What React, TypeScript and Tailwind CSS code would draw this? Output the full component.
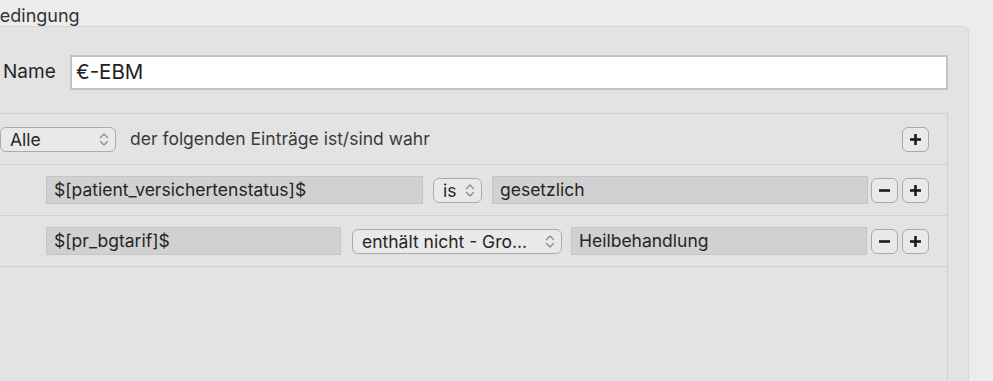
import React from 'react';

const font = { fontFamily: 'Inter, "Liberation Sans", sans-serif' };

function Chevrons() {
  return (
    <svg width="10" height="15" viewBox="0 0 10 15" fill="none" stroke="#8a8a8a" strokeWidth="1.3" strokeLinecap="round" strokeLinejoin="round">
      <path d="M1.5 5.5 L5 2 L8.5 5.5" />
      <path d="M1.5 9.5 L5 13 L8.5 9.5" />
    </svg>
  );
}

function PopUp({ label, className }: { label: string; className: string }) {
  return (
    <div className={`flex h-[25px] flex-none items-center justify-between rounded-[6px] border border-[#ababab] bg-[#e9e9e9] pl-[9px] pr-[6px] text-[17.5px] leading-[21px] text-[#262626] ${className}`}>
      <span className="overflow-hidden whitespace-nowrap">{label}</span>
      <Chevrons />
    </div>
  );
}

function Field({ text, className }: { text: string; className: string }) {
  return (
    <div className={`flex h-[28px] flex-none items-center border border-[#c4c4c4] bg-[#d1d1d1] px-[7px] text-[17.5px] leading-[22px] text-[#252525] ${className}`}>
      {text}
    </div>
  );
}

function SquareButton({ sign, className = '' }: { sign: '+' | '-'; className?: string }) {
  return (
    <div className={`flex h-[25px] w-[27px] flex-none items-center justify-center rounded-[6px] border border-[#a9a9a9] bg-[#e9e9e9] ${className}`}>
      <svg width="13" height="13" viewBox="0 0 13 13" stroke="#1a1a1a" strokeWidth="2.6">
        <path d="M1 6.5 H12" />
        {sign === '+' && <path d="M6.5 1 V12" />}
      </svg>
    </div>
  );
}

export default function App() {
  return (
    <div className="h-[381px] w-[993px] overflow-hidden bg-[#ececec]" style={font}>
      <div className="ml-[-12px] h-[26px] whitespace-nowrap pt-[6px] text-[18px] leading-[20px] text-[#333]">Bedingung</div>

      <div className="ml-[-10px] h-[400px] w-[979px] rounded-tr-[6px] border border-[#d6d6d6] bg-[#e3e3e3]">
        <div className="flex items-center pl-[12px] pt-[28px]">
          <span className="w-[67px] flex-none text-[19px] text-[#262626]">Name</span>
          <div className="flex h-[35px] w-[878px] flex-none items-center border-2 border-[#c3c3c3] bg-white pl-[4px] text-[20.5px] text-[#222]">
            €-EBM
          </div>
        </div>

        <div className="mt-[23px] h-[300px] w-[957px] border-r border-t border-[#cfcfcf]">
          <div className="flex h-[51px] items-center border-b border-[#d0d0d0] pl-[9px] pr-[18px]">
            <PopUp label="Alle" className="w-[116px]" />
            <span className="ml-[14px] text-[17.5px] text-[#3a3a3a]">der folgenden Einträge ist/sind wahr</span>
            <SquareButton sign="+" className="ml-auto" />
          </div>

          <div className="flex h-[51px] items-center border-b border-[#d0d0d0] pl-[55px]">
            <Field text="$[patient_versichertenstatus]$" className="w-[377px]" />
            <PopUp label="is" className="ml-[10px] w-[49px]" />
            <Field text="gesetzlich" className="ml-[10px] w-[376px]" />
            <SquareButton sign="-" className="ml-[3px]" />
            <SquareButton sign="+" className="ml-[4px]" />
          </div>

          <div className="flex h-[51px] items-center border-b border-[#d0d0d0] pl-[55px]">
            <Field text="$[pr_bgtarif]$" className="w-[295px]" />
            <PopUp label="enthält nicht - Gro..." className="ml-[11px] w-[210px]" />
            <Field text="Heilbehandlung" className="ml-[9px] w-[296px]" />
            <SquareButton sign="-" className="ml-[4px]" />
            <SquareButton sign="+" className="ml-[4px]" />
          </div>
        </div>
      </div>
    </div>
  );
}
